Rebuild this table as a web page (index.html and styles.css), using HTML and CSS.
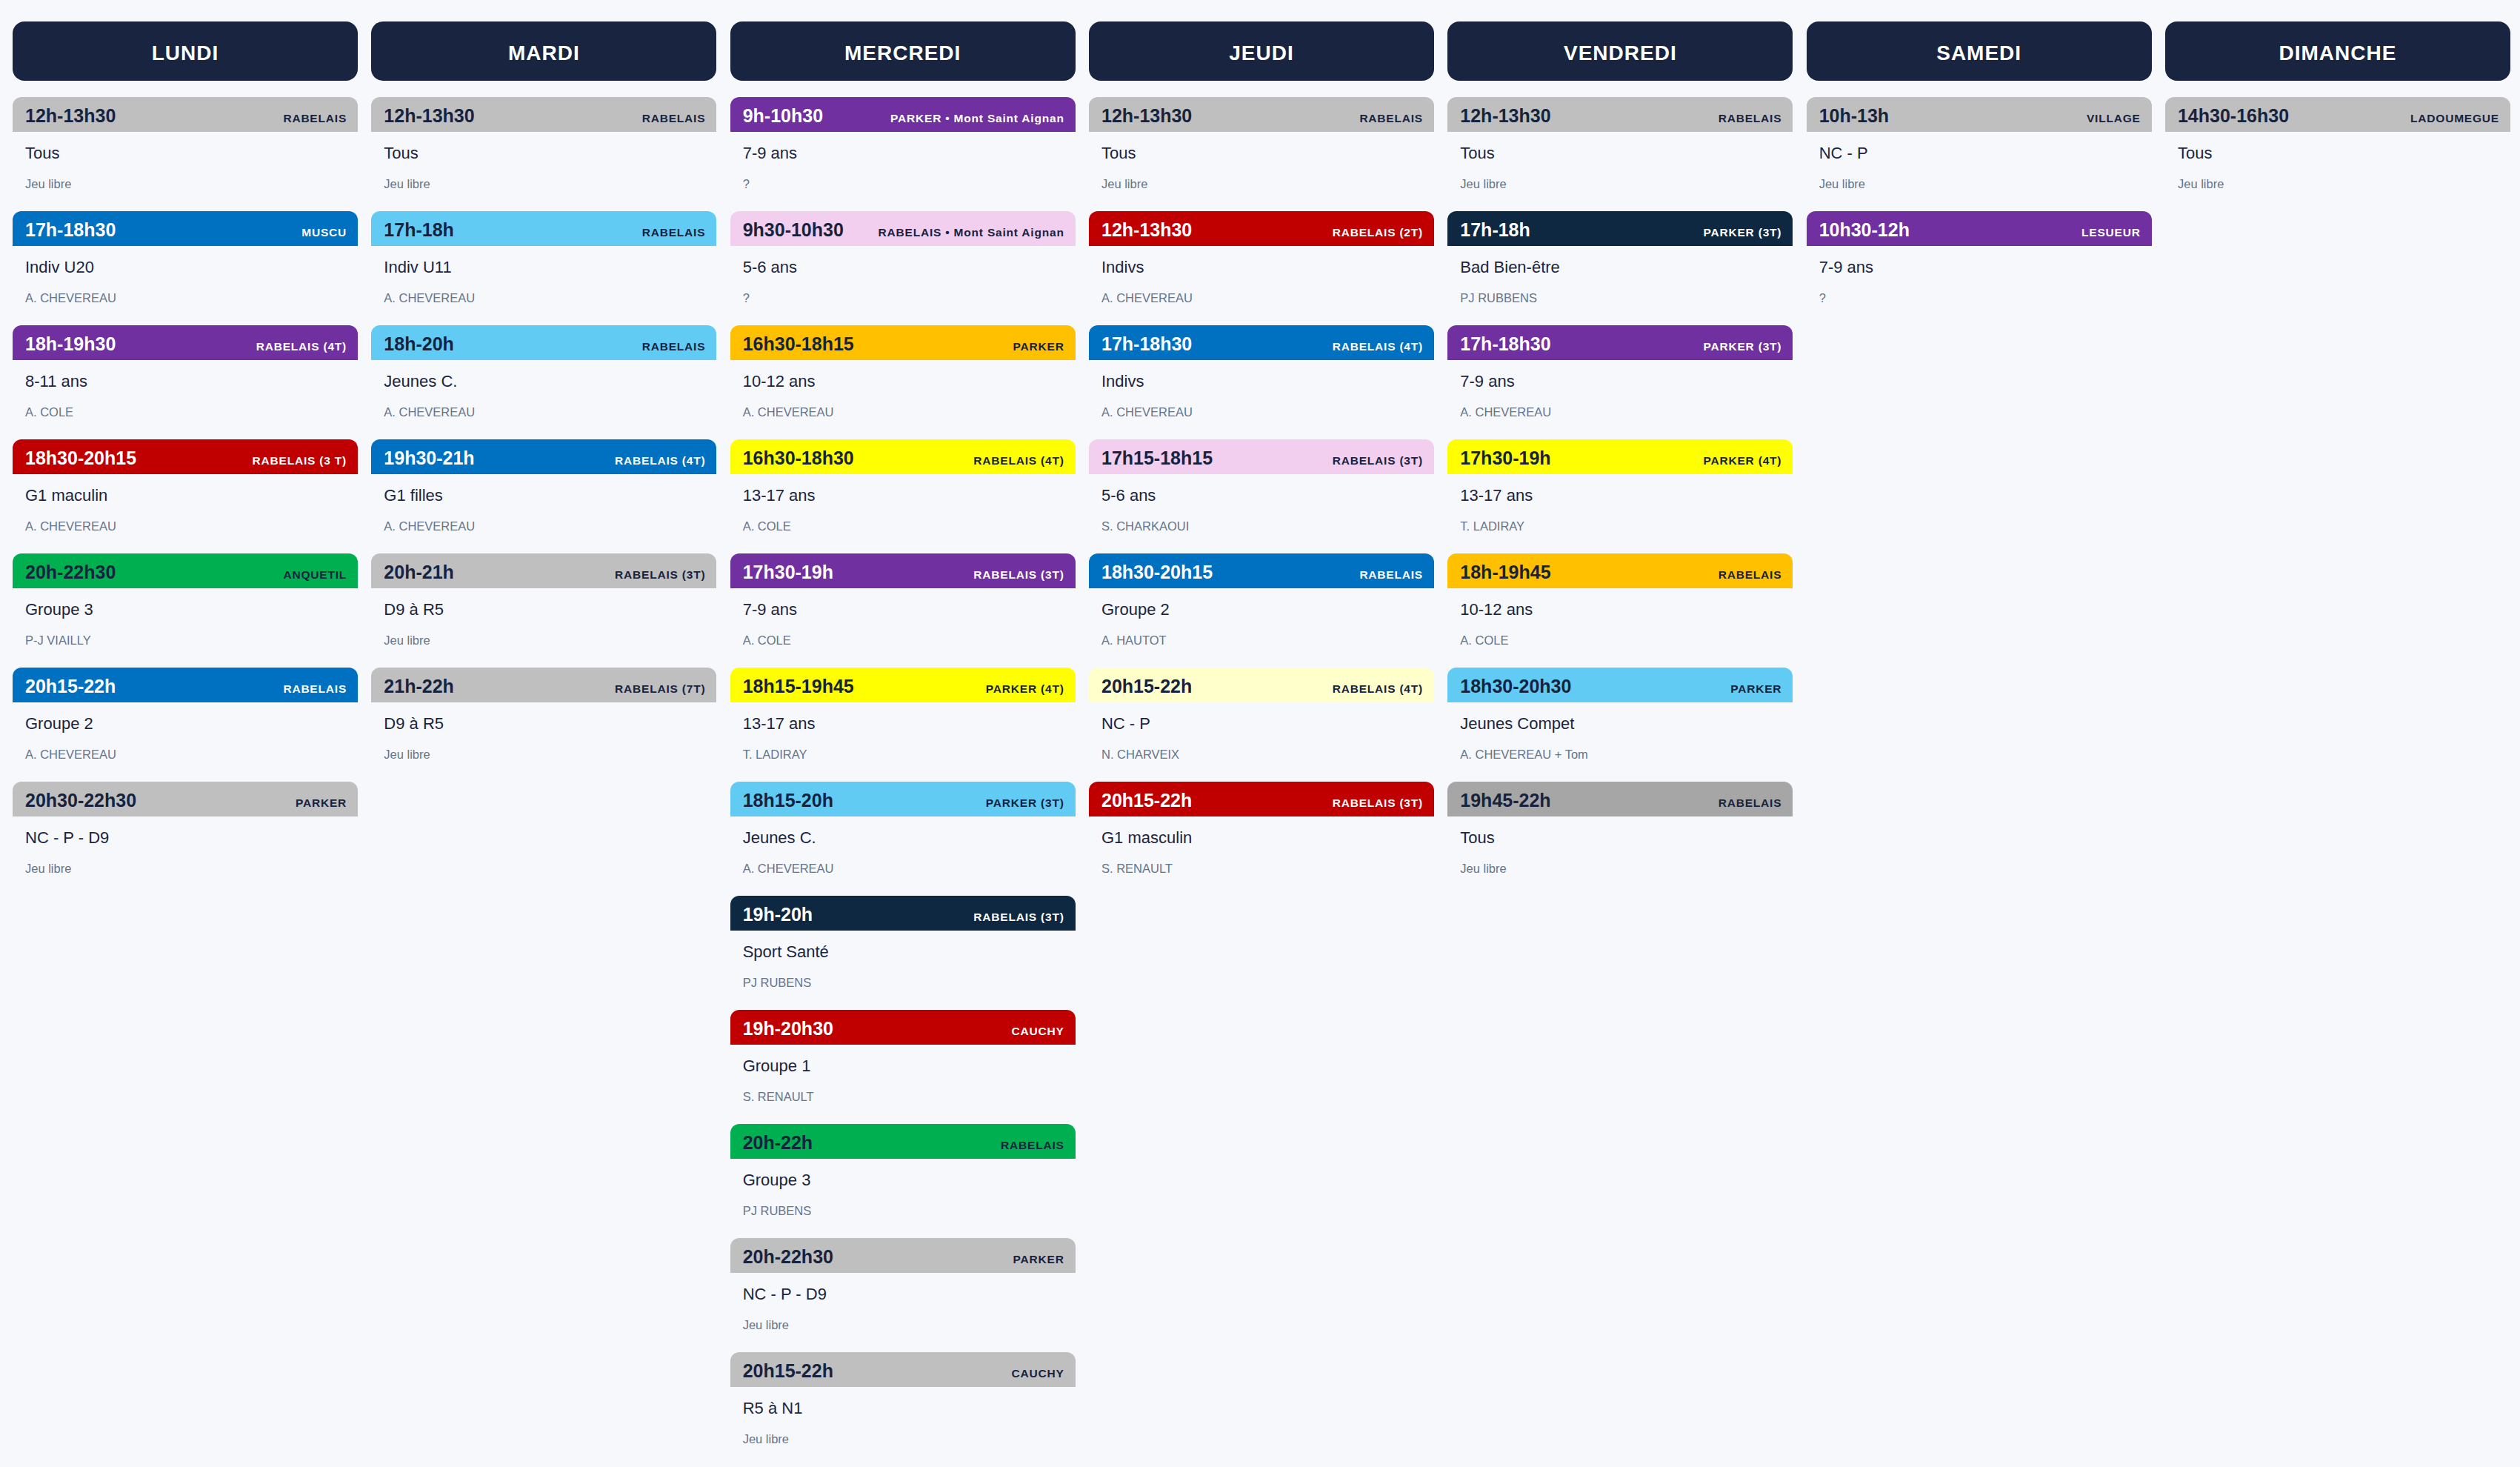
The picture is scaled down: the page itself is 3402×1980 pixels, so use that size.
FILE: index.html
```html
<!DOCTYPE html>
<html lang="fr">
<head>
<meta charset="utf-8">
<title>Planning</title>
<link rel="stylesheet" href="styles.css">
</head>
<body>
<main class="week">
  <section class="day">
    <h2 class="day-title">LUNDI</h2>
    <article class="slot c-grey"><div class="slot-head"><span class="time">12h-13h30</span><span class="place">RABELAIS</span></div><div class="slot-body"><div class="name">Tous</div><div class="coach">Jeu libre</div></div></article>
    <article class="slot c-blue"><div class="slot-head"><span class="time">17h-18h30</span><span class="place">MUSCU</span></div><div class="slot-body"><div class="name">Indiv U20</div><div class="coach">A. CHEVEREAU</div></div></article>
    <article class="slot c-purple"><div class="slot-head"><span class="time">18h-19h30</span><span class="place">RABELAIS (4T)</span></div><div class="slot-body"><div class="name">8-11 ans</div><div class="coach">A. COLE</div></div></article>
    <article class="slot c-red"><div class="slot-head"><span class="time">18h30-20h15</span><span class="place">RABELAIS (3 T)</span></div><div class="slot-body"><div class="name">G1 maculin</div><div class="coach">A. CHEVEREAU</div></div></article>
    <article class="slot c-green"><div class="slot-head"><span class="time">20h-22h30</span><span class="place">ANQUETIL</span></div><div class="slot-body"><div class="name">Groupe 3</div><div class="coach">P-J VIAILLY</div></div></article>
    <article class="slot c-blue"><div class="slot-head"><span class="time">20h15-22h</span><span class="place">RABELAIS</span></div><div class="slot-body"><div class="name">Groupe 2</div><div class="coach">A. CHEVEREAU</div></div></article>
    <article class="slot c-grey"><div class="slot-head"><span class="time">20h30-22h30</span><span class="place">PARKER</span></div><div class="slot-body"><div class="name">NC - P - D9</div><div class="coach">Jeu libre</div></div></article>
  </section>

  <section class="day">
    <h2 class="day-title">MARDI</h2>
    <article class="slot c-grey"><div class="slot-head"><span class="time">12h-13h30</span><span class="place">RABELAIS</span></div><div class="slot-body"><div class="name">Tous</div><div class="coach">Jeu libre</div></div></article>
    <article class="slot c-sky"><div class="slot-head"><span class="time">17h-18h</span><span class="place">RABELAIS</span></div><div class="slot-body"><div class="name">Indiv U11</div><div class="coach">A. CHEVEREAU</div></div></article>
    <article class="slot c-sky"><div class="slot-head"><span class="time">18h-20h</span><span class="place">RABELAIS</span></div><div class="slot-body"><div class="name">Jeunes C.</div><div class="coach">A. CHEVEREAU</div></div></article>
    <article class="slot c-blue"><div class="slot-head"><span class="time">19h30-21h</span><span class="place">RABELAIS (4T)</span></div><div class="slot-body"><div class="name">G1 filles</div><div class="coach">A. CHEVEREAU</div></div></article>
    <article class="slot c-grey"><div class="slot-head"><span class="time">20h-21h</span><span class="place">RABELAIS (3T)</span></div><div class="slot-body"><div class="name">D9 à R5</div><div class="coach">Jeu libre</div></div></article>
    <article class="slot c-grey"><div class="slot-head"><span class="time">21h-22h</span><span class="place">RABELAIS (7T)</span></div><div class="slot-body"><div class="name">D9 à R5</div><div class="coach">Jeu libre</div></div></article>
  </section>

  <section class="day">
    <h2 class="day-title">MERCREDI</h2>
    <article class="slot c-purple"><div class="slot-head"><span class="time">9h-10h30</span><span class="place">PARKER • Mont Saint Aignan</span></div><div class="slot-body"><div class="name">7-9 ans</div><div class="coach">?</div></div></article>
    <article class="slot c-pink"><div class="slot-head"><span class="time">9h30-10h30</span><span class="place">RABELAIS • Mont Saint Aignan</span></div><div class="slot-body"><div class="name">5-6 ans</div><div class="coach">?</div></div></article>
    <article class="slot c-orange"><div class="slot-head"><span class="time">16h30-18h15</span><span class="place">PARKER</span></div><div class="slot-body"><div class="name">10-12 ans</div><div class="coach">A. CHEVEREAU</div></div></article>
    <article class="slot c-yellow"><div class="slot-head"><span class="time">16h30-18h30</span><span class="place">RABELAIS (4T)</span></div><div class="slot-body"><div class="name">13-17 ans</div><div class="coach">A. COLE</div></div></article>
    <article class="slot c-purple"><div class="slot-head"><span class="time">17h30-19h</span><span class="place">RABELAIS (3T)</span></div><div class="slot-body"><div class="name">7-9 ans</div><div class="coach">A. COLE</div></div></article>
    <article class="slot c-yellow"><div class="slot-head"><span class="time">18h15-19h45</span><span class="place">PARKER (4T)</span></div><div class="slot-body"><div class="name">13-17 ans</div><div class="coach">T. LADIRAY</div></div></article>
    <article class="slot c-sky"><div class="slot-head"><span class="time">18h15-20h</span><span class="place">PARKER (3T)</span></div><div class="slot-body"><div class="name">Jeunes C.</div><div class="coach">A. CHEVEREAU</div></div></article>
    <article class="slot c-navy"><div class="slot-head"><span class="time">19h-20h</span><span class="place">RABELAIS (3T)</span></div><div class="slot-body"><div class="name">Sport Santé</div><div class="coach">PJ RUBENS</div></div></article>
    <article class="slot c-red"><div class="slot-head"><span class="time">19h-20h30</span><span class="place">CAUCHY</span></div><div class="slot-body"><div class="name">Groupe 1</div><div class="coach">S. RENAULT</div></div></article>
    <article class="slot c-green"><div class="slot-head"><span class="time">20h-22h</span><span class="place">RABELAIS</span></div><div class="slot-body"><div class="name">Groupe 3</div><div class="coach">PJ RUBENS</div></div></article>
    <article class="slot c-grey"><div class="slot-head"><span class="time">20h-22h30</span><span class="place">PARKER</span></div><div class="slot-body"><div class="name">NC - P - D9</div><div class="coach">Jeu libre</div></div></article>
    <article class="slot c-grey"><div class="slot-head"><span class="time">20h15-22h</span><span class="place">CAUCHY</span></div><div class="slot-body"><div class="name">R5 à N1</div><div class="coach">Jeu libre</div></div></article>
  </section>

  <section class="day">
    <h2 class="day-title">JEUDI</h2>
    <article class="slot c-grey"><div class="slot-head"><span class="time">12h-13h30</span><span class="place">RABELAIS</span></div><div class="slot-body"><div class="name">Tous</div><div class="coach">Jeu libre</div></div></article>
    <article class="slot c-red"><div class="slot-head"><span class="time">12h-13h30</span><span class="place">RABELAIS (2T)</span></div><div class="slot-body"><div class="name">Indivs</div><div class="coach">A. CHEVEREAU</div></div></article>
    <article class="slot c-blue"><div class="slot-head"><span class="time">17h-18h30</span><span class="place">RABELAIS (4T)</span></div><div class="slot-body"><div class="name">Indivs</div><div class="coach">A. CHEVEREAU</div></div></article>
    <article class="slot c-pink"><div class="slot-head"><span class="time">17h15-18h15</span><span class="place">RABELAIS (3T)</span></div><div class="slot-body"><div class="name">5-6 ans</div><div class="coach">S. CHARKAOUI</div></div></article>
    <article class="slot c-blue"><div class="slot-head"><span class="time">18h30-20h15</span><span class="place">RABELAIS</span></div><div class="slot-body"><div class="name">Groupe 2</div><div class="coach">A. HAUTOT</div></div></article>
    <article class="slot c-cream"><div class="slot-head"><span class="time">20h15-22h</span><span class="place">RABELAIS (4T)</span></div><div class="slot-body"><div class="name">NC - P</div><div class="coach">N. CHARVEIX</div></div></article>
    <article class="slot c-red"><div class="slot-head"><span class="time">20h15-22h</span><span class="place">RABELAIS (3T)</span></div><div class="slot-body"><div class="name">G1 masculin</div><div class="coach">S. RENAULT</div></div></article>
  </section>

  <section class="day">
    <h2 class="day-title">VENDREDI</h2>
    <article class="slot c-grey"><div class="slot-head"><span class="time">12h-13h30</span><span class="place">RABELAIS</span></div><div class="slot-body"><div class="name">Tous</div><div class="coach">Jeu libre</div></div></article>
    <article class="slot c-navy"><div class="slot-head"><span class="time">17h-18h</span><span class="place">PARKER (3T)</span></div><div class="slot-body"><div class="name">Bad Bien-être</div><div class="coach">PJ RUBBENS</div></div></article>
    <article class="slot c-purple"><div class="slot-head"><span class="time">17h-18h30</span><span class="place">PARKER (3T)</span></div><div class="slot-body"><div class="name">7-9 ans</div><div class="coach">A. CHEVEREAU</div></div></article>
    <article class="slot c-yellow"><div class="slot-head"><span class="time">17h30-19h</span><span class="place">PARKER (4T)</span></div><div class="slot-body"><div class="name">13-17 ans</div><div class="coach">T. LADIRAY</div></div></article>
    <article class="slot c-orange"><div class="slot-head"><span class="time">18h-19h45</span><span class="place">RABELAIS</span></div><div class="slot-body"><div class="name">10-12 ans</div><div class="coach">A. COLE</div></div></article>
    <article class="slot c-sky"><div class="slot-head"><span class="time">18h30-20h30</span><span class="place">PARKER</span></div><div class="slot-body"><div class="name">Jeunes Compet</div><div class="coach">A. CHEVEREAU + Tom</div></div></article>
    <article class="slot c-darkgrey"><div class="slot-head"><span class="time">19h45-22h</span><span class="place">RABELAIS</span></div><div class="slot-body"><div class="name">Tous</div><div class="coach">Jeu libre</div></div></article>
  </section>

  <section class="day">
    <h2 class="day-title">SAMEDI</h2>
    <article class="slot c-grey"><div class="slot-head"><span class="time">10h-13h</span><span class="place">VILLAGE</span></div><div class="slot-body"><div class="name">NC - P</div><div class="coach">Jeu libre</div></div></article>
    <article class="slot c-purple"><div class="slot-head"><span class="time">10h30-12h</span><span class="place">LESUEUR</span></div><div class="slot-body"><div class="name">7-9 ans</div><div class="coach">?</div></div></article>
  </section>

  <section class="day">
    <h2 class="day-title">DIMANCHE</h2>
    <article class="slot c-grey"><div class="slot-head"><span class="time">14h30-16h30</span><span class="place">LADOUMEGUE</span></div><div class="slot-body"><div class="name">Tous</div><div class="coach">Jeu libre</div></div></article>
  </section>
</main>
</body>
</html>
```

FILE: styles.css
```css
* { box-sizing: border-box; }

html, body {
  margin: 0;
  padding: 0;
  background: #f6f8fc;
}

body {
  font-family: "Liberation Sans", Arial, Helvetica, sans-serif;
  color: #1b2540;
}

.week {
  display: grid;
  grid-template-columns: repeat(7, 1fr);
  column-gap: 18.3px;
  padding: 29px 13px 0 17px;
  align-items: start;
}

.day {
  display: flex;
  flex-direction: column;
  gap: 13px;
  min-width: 0;
}

.day-title {
  margin: 0 0 9px 0;
  height: 80px;
  display: flex;
  align-items: center;
  justify-content: center;
  padding-top: 6px;
  background: #182440;
  color: #ffffff;
  border-radius: 16px;
  font-size: 28px;
  font-weight: 700;
  letter-spacing: 1px;
}

.slot-head {
  height: 47px;
  display: flex;
  align-items: baseline;
  justify-content: space-between;
  padding: 11px 15px 0 17px;
  border-radius: 12px 12px 0 0;
  color: #16233f;
}

.time {
  font-size: 25px;
  font-weight: 700;
  line-height: 28px;
  white-space: nowrap;
}

.place {
  font-size: 15.5px;
  font-weight: 700;
  letter-spacing: 0.8px;
  white-space: nowrap;
}

.slot-body {
  padding: 16px 17px 14px 17px;
}

.name {
  font-size: 22px;
  line-height: 26px;
  color: #1b2540;
}

.coach {
  margin-top: 18px;
  font-size: 16.5px;
  line-height: 20px;
  color: #64748b;
}

/* colour variants */
.c-grey .slot-head { background: #bfbfbf; }
.c-darkgrey .slot-head { background: #a6a6a6; }
.c-blue .slot-head { background: #0070c0; color: #ffffff; }
.c-purple .slot-head { background: #7030a0; color: #ffffff; }
.c-red .slot-head { background: #c00000; color: #ffffff; }
.c-navy .slot-head { background: #0e2841; color: #ffffff; }
.c-green .slot-head { background: #00b050; }
.c-sky .slot-head { background: #61cbf3; }
.c-pink .slot-head { background: #f2ceef; }
.c-orange .slot-head { background: #ffc000; }
.c-yellow .slot-head { background: #ffff00; }
.c-cream .slot-head { background: #ffffcc; }
```
